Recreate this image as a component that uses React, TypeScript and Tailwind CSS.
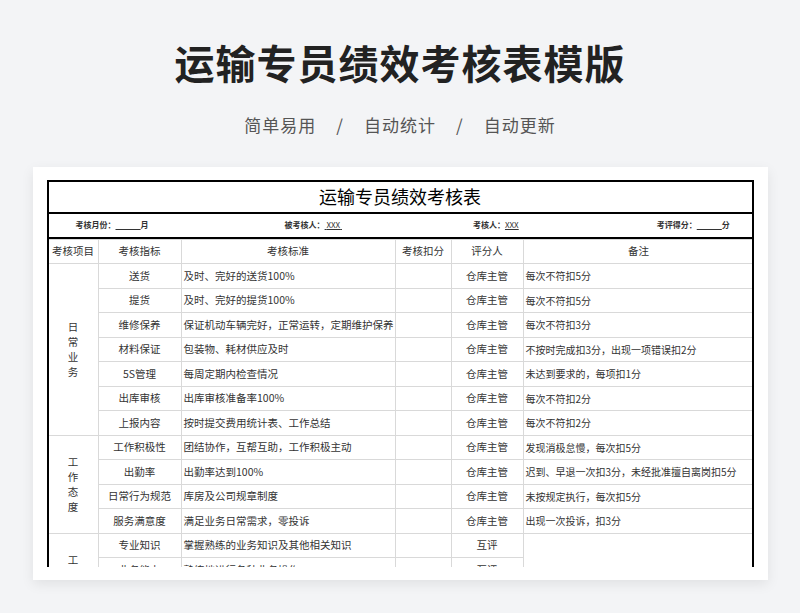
const rows: [string, string, string, string][] = [
  ['送货', '及时、完好的送货100%', '仓库主管', '每次不符扣5分'],
  ['提货', '及时、完好的提货100%', '仓库主管', '每次不符扣5分'],
  ['维修保养', '保证机动车辆完好，正常运转，定期维护保养', '仓库主管', '每次不符扣3分'],
  ['材料保证', '包装物、耗材供应及时', '仓库主管', '不按时完成扣3分，出现一项错误扣2分'],
  ['5S管理', '每周定期内检查情况', '仓库主管', '未达到要求的，每项扣1分'],
  ['出库审核', '出库审核准备率100%', '仓库主管', '每次不符扣2分'],
  ['上报内容', '按时提交费用统计表、工作总结', '仓库主管', '每次不符扣2分'],
  ['工作积极性', '团结协作，互帮互助，工作积极主动', '仓库主管', '发现消极怠慢，每次扣5分'],
  ['出勤率', '出勤率达到100%', '仓库主管', '迟到、早退一次扣3分，未经批准擅自离岗扣5分'],
  ['日常行为规范', '库房及公司规章制度', '仓库主管', '未按规定执行，每次扣5分'],
  ['服务满意度', '满足业务日常需求，零投诉', '仓库主管', '出现一次投诉，扣3分'],
  ['专业知识', '掌握熟练的业务知识及其他相关知识', '互评', ''],
  ['业务能力', '熟练地进行各种业务操作', '互评', ''],
  ['工作效率', '按时完成各项工作任务', '互评', ''],
  ['沟通能力', '与各部门沟通顺畅', '互评', ''],
];

const groups: Record<number, [string, number]> = {
  0: ['日常业务', 7],
  7: ['工作态度', 4],
  11: ['工作能力', 4],
};

const cell = 'border border-[#d9d9d9] h-[24.5px] p-0';

export default function App() {
  return (
    <div className="min-h-[613px] bg-[#f3f4f6] flex flex-col items-center" style={{ fontFamily: '"Noto Sans CJK SC", sans-serif' }}>
      <h1 className="mt-[38px] text-[40px] leading-[48px] font-bold text-[#222] tracking-[1px]">运输专员绩效考核表模版</h1>
      <div className="mt-[26px] text-[17px] text-[#555] flex gap-[20px] tracking-[1px]">
        <span>简单易用</span><span>/</span><span>自动统计</span><span>/</span><span>自动更新</span>
      </div>
      <div className="mt-[29px] w-[735px] h-[413px] bg-white shadow-[0_4px_12px_rgba(0,0,0,0.08)] pt-[13px] pl-[14px]">
        <div className="w-[707px] h-[387px] overflow-hidden border-x-2 border-t-2 border-black text-[#333]">
          <div className="h-[32px] flex items-center justify-center text-[18px] text-black border-b-2 border-black">运输专员绩效考核表</div>
          <div className="h-[25px] flex items-center text-[8px] font-bold text-[#333] border-b-2 border-black whitespace-nowrap overflow-hidden">
            <span className="ml-[27px] shrink-0">考核月份：<span className="underline font-normal">{'\u00a0'.repeat(14)}</span>月</span>
            <span className="ml-[136px] shrink-0">被考核人：<span className="underline font-normal">{'\u00a0'}XXX{'\u00a0'}</span></span>
            <span className="ml-[131px] shrink-0">考核人：<span className="underline font-normal">XXX</span></span>
            <span className="ml-[138px] shrink-0">考评得分：<span className="underline font-normal">{'\u00a0'.repeat(14)}</span>分</span>
          </div>
          <table className="border-collapse text-[10.5px] w-[707px] table-fixed -mx-px">
            <colgroup>
              <col className="w-[50px]" /><col className="w-[83px]" /><col className="w-[214px]" />
              <col className="w-[56px]" /><col className="w-[72px]" /><col />
            </colgroup>
            <tbody>
              <tr className="text-center">
                <td className={cell}>考核项目</td><td className={cell}>考核指标</td><td className={cell}>考核标准</td>
                <td className={cell}>考核扣分</td><td className={cell}>评分人</td><td className={cell}>备注</td>
              </tr>
              {rows.map((r, i) => (
                <tr key={i}>
                  {groups[i] && (
                    <td rowSpan={groups[i][1]} className={cell + ' text-center'}>
                      <div className="w-[12px] mx-auto leading-[15px]">{groups[i][0]}</div>
                    </td>
                  )}
                  <td className={cell + ' text-center'}>{r[0]}</td>
                  <td className={cell + ' pl-[2px]'}>{r[1]}</td>
                  <td className={cell}></td>
                  <td className={cell + ' text-center'}>{r[2]}</td>
                  {i < 11 && <td className={cell + ' pl-[2px] whitespace-nowrap text-[10px]'}>{r[3]}</td>}
                  {i === 11 && <td rowSpan={4} className={cell}></td>}
                </tr>
              ))}
            </tbody>
          </table>
        </div>
      </div>
    </div>
  );
}
